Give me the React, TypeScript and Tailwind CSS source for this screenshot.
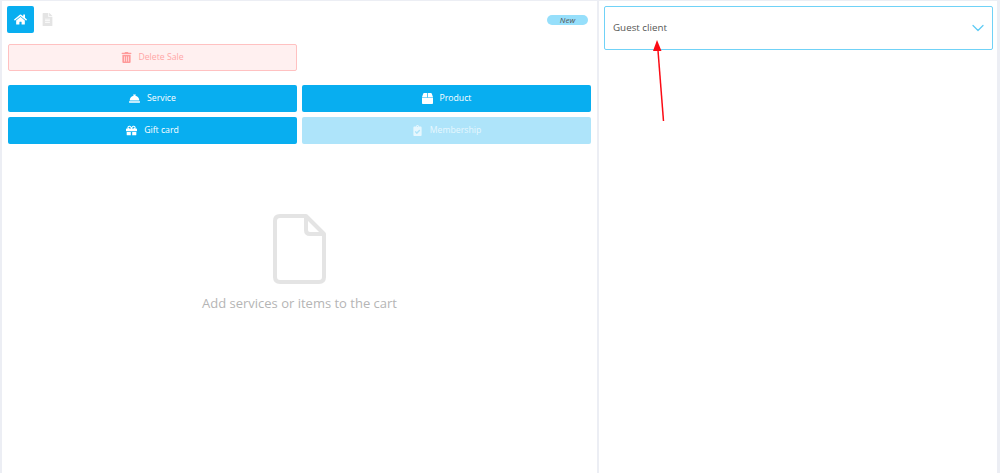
import { FaHome, FaTrashAlt, FaConciergeBell, FaBox, FaGift, FaClipboardCheck, FaFileAlt } from "react-icons/fa";
import { ChevronDown } from "lucide-react";
import type { ReactNode } from "react";

function ActionButton({ icon, label, faded }: { icon: ReactNode; label: string; faded?: boolean }) {
  return (
    <button
      className={`h-[27px] rounded-[2px] flex items-center justify-center gap-[7px] text-[8.7px] ${
        faded ? "bg-[#aee4fa] text-[#e6f7fe]" : "bg-[#08aef0] text-white"
      }`}
    >
      {icon}
      <span>{label}</span>
    </button>
  );
}

export default function App() {
  return (
    <div className="relative h-[473px] w-[1000px] overflow-hidden bg-[#eceef4] pt-px pl-[2px] pr-[3px] flex gap-[2px] font-['Open_Sans',sans-serif]">
      <div className="w-[595px] bg-white pt-[5px] px-[5px]">
        <div className="flex items-center justify-between h-[27px]">
          <div className="flex items-center gap-[7px]">
            <div className="w-[27px] h-[27px] rounded-[2px] bg-[#08aef0] flex items-center justify-center">
              <FaHome className="text-white text-[13px]" />
            </div>
            <FaFileAlt className="text-[#e4e4e4] text-[13px]" />
          </div>
          <div className="mr-[4px] w-[41px] h-[10px] rounded-full bg-[#96dffb] flex items-center justify-center text-[8px] italic text-[#555555]">
            New
          </div>
        </div>
        <div className="mt-[11px] w-[289px] h-[27px] ml-px rounded-[2px] border border-[#ffc1c1] bg-[#fff0f0] flex items-center justify-center gap-[6px] text-[8.7px] text-[#ffa6a6]">
          <FaTrashAlt className="text-[11px] text-[#ff9a9a]" />
          <span>Delete Sale</span>
        </div>
        <div className="mt-[14px] ml-px grid grid-cols-2 gap-x-[5px] gap-y-[5px] w-[583px]">
          <ActionButton icon={<FaConciergeBell className="text-[11px]" />} label="Service" />
          <ActionButton icon={<FaBox className="text-[11px]" />} label="Product" />
          <ActionButton icon={<FaGift className="text-[11px]" />} label="Gift card" />
          <ActionButton icon={<FaClipboardCheck className="text-[11px]" />} label="Membership" faded />
        </div>
        <div className="mt-[70px] flex flex-col items-center w-[583px] ml-px">
          <svg width="53" height="70" viewBox="0 0 53 70" fill="none" stroke="#e4e4e4" strokeWidth="4" strokeLinejoin="round">
            <path d="M7 2 H33 L51 20 V63 Q51 68 46 68 H7 Q2 68 2 63 V7 Q2 2 7 2 Z" />
            <path d="M33 2 V16 Q33 20 37 20 H51" />
          </svg>
          <p className="mt-[9px] text-[13px] leading-[20px] text-[#b5b5b5]">Add services or items to the cart</p>
        </div>
      </div>
      <div className="w-[398px] shrink-0 bg-white pt-[5px] pl-[5px] pr-[4px]">
        <div className="h-[44px] w-[389px] rounded-[2px] border border-[#70d2f7] flex items-center justify-between pl-[8px] pr-[4px] text-[9.8px] text-[#555555]">
          <span className="pt-px">Guest client</span>
          <ChevronDown className="w-[20px] h-[20px] text-[#5fcbf5]" strokeWidth={1.5} />
        </div>
      </div>
      <svg className="absolute left-[650px] top-[40px]" width="20" height="84" viewBox="0 0 20 84">
        <path d="M13.5 81 L7.8 8" stroke="#fb0a14" strokeWidth="1.5" fill="none" />
        <path d="M7 0 L11.5 11 L3 11 Z" fill="#fb0a14" />
      </svg>
    </div>
  );
}
